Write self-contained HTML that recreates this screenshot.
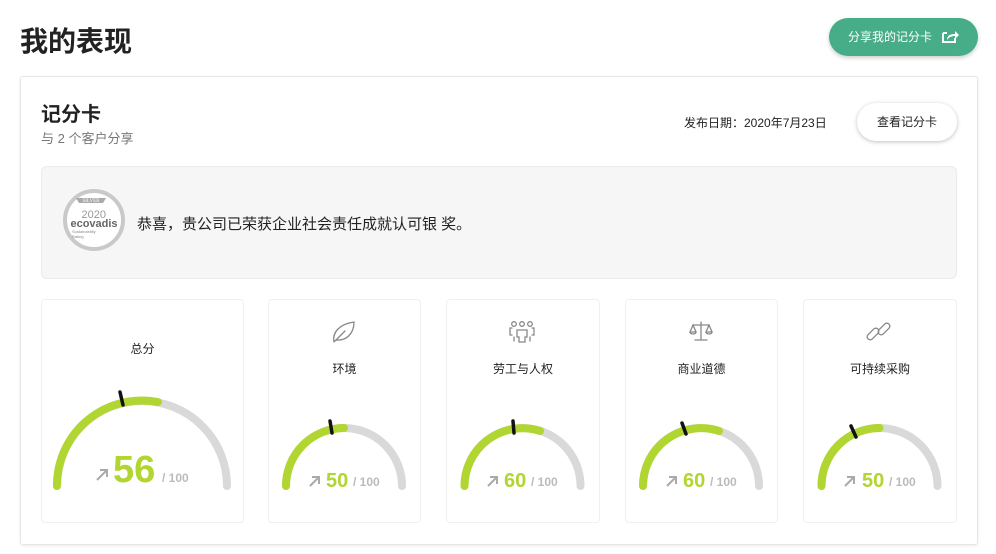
<!DOCTYPE html>
<html><head><meta charset="utf-8"><style>
*{margin:0;padding:0;box-sizing:border-box}
body{width:996px;height:554px;background:#fff;font-family:"Liberation Sans","Noto Sans CJK SC",sans-serif;position:relative;overflow:hidden;color:#222}
.abs{position:absolute}
h1{position:absolute;left:20px;top:20px;font-size:28px;font-weight:bold;color:#222}
.share{left:829px;top:18px;width:149px;height:38px;border-radius:19px;background:#46ad88;color:#fff;font-size:12px;line-height:38px;padding-left:19px;box-shadow:0 2px 4px rgba(0,0,0,.2)}
.outer{left:20px;top:76px;width:958px;height:469px;border:1px solid #e6e6e6;border-radius:3px;box-shadow:0 1px 3px rgba(0,0,0,.08)}
.view{left:857px;top:103px;width:100px;height:38px;border-radius:19px;background:#fff;box-shadow:0 1px 4px rgba(0,0,0,.25);font-size:12px;text-align:center;line-height:38px}
.banner{left:41px;top:166px;width:916px;height:113px;background:#f6f6f6;border:1px solid #ebebeb;border-radius:6px}
.card{top:299px;height:224px;border:1px solid #f0f0f0;border-radius:4px;background:#fff}
.lbl{font-size:12px;color:#222;text-align:center;width:100%;position:absolute}
</style></head><body>
<h1>我的表现</h1>
<div class="abs share">分享我的记分卡 <svg style="position:absolute;left:112px;top:11px" width="18" height="15" viewBox="0 0 18 15"><path d="M2 4h4M2 4v9h12v-4" fill="none" stroke="#fff" stroke-width="2"/><path d="M6 11c0-5 4-6 8-6V2l4 4-4 4V7c-3 0-6 1-8 4z" fill="#fff"/></svg></div>
<div class="abs outer"></div>
<div class="abs" style="left:41px;top:98px;font-size:20px;font-weight:bold">记分卡</div>
<div class="abs" style="left:41px;top:128px;font-size:13px;color:#777">与 2 个客户分享</div>
<div class="abs" style="left:684px;top:114px;font-size:12px">发布日期：2020年7月23日</div>
<div class="abs view">查看记分卡</div>
<div class="abs banner"></div>
<svg class="abs" style="left:62px;top:188px" width="66" height="64" viewBox="0 0 66 64">
<circle cx="32" cy="32" r="29" fill="#fff" stroke="#c9c9c9" stroke-width="4"/>
<path d="M14 10h30l-3 5h-24z" fill="#aaa"/>
<text x="29" y="14" font-size="5" fill="#fff" text-anchor="middle" font-family="Liberation Serif">SILVER</text>
<text x="44" y="30" font-size="11" fill="#999" text-anchor="end">2020</text>
<text x="32" y="39" font-size="11" fill="#666" text-anchor="middle" font-weight="bold">ecovadis</text>
<text x="10" y="45" font-size="4" fill="#888">Sustainability</text>
<text x="10" y="50" font-size="4" fill="#888">Rating</text>
</svg>
<div class="abs" style="left:137px;top:213px;font-size:15px;color:#222">恭喜，贵公司已荣获企业社会责任成就认可银 奖。</div>

<div class="abs card" style="left:41px;width:203px"><div class="lbl" style="top:40px">总分</div></div>
<div class="abs card" style="left:268px;width:153px"><div class="lbl" style="top:60px">环境</div></div>
<div class="abs card" style="left:446px;width:154px"><div class="lbl" style="top:60px">劳工与人权</div></div>
<div class="abs card" style="left:625px;width:153px"><div class="lbl" style="top:60px">商业道德</div></div>
<div class="abs card" style="left:803px;width:154px"><div class="lbl" style="top:60px">可持续采购</div></div>

<svg class="abs" style="left:0;top:0" width="996" height="554" viewBox="0 0 996 554" fill="none">
<g stroke="#888" stroke-width="1.3" stroke-linecap="round">
<path d="M334 342c-2-10 6-18 20-20 0 12-8 19-18 18M335 341l10-10"/>
<circle cx="514" cy="324" r="2.3"/><circle cx="522" cy="324" r="2.3"/><circle cx="530" cy="324" r="2.3"/>
<path d="M517 330h10v7h-2v5h-6v-5h-2zM512 328h-2v7h2M532 328h2v7h-2M514 337v4M530 337v4"/>
<path d="M701 322v18M693 325h16M695 340h12M693 325l-3 7h6zM709 325l-3 7h6zM690 332a3 2 0 0 0 6 0M706 332a3 2 0 0 0 6 0"/>
<rect x="866" y="331" width="14" height="6" rx="3" transform="rotate(-45 873 334)"/>
<rect x="877" y="326" width="14" height="6" rx="3" transform="rotate(-45 884 329)"/>
</g>
<g stroke-width="8" stroke-linecap="round">
<path d="M57 486A85 85 0 0 1 227 486" stroke="#d9d9d9"/>
<path d="M57 486A85 85 0 0 1 158 402" stroke="#b1d531"/>
<path d="M286 486A58 58 0 0 1 402 486" stroke="#d9d9d9"/>
<path d="M286 486A58 58 0 0 1 344 428" stroke="#b1d531"/>
<path d="M464.5 486A58 58 0 0 1 580.5 486" stroke="#d9d9d9"/>
<path d="M464.5 486A58 58 0 0 1 540 431" stroke="#b1d531"/>
<path d="M643 486A58 58 0 0 1 759 486" stroke="#d9d9d9"/>
<path d="M643 486A58 58 0 0 1 719 431" stroke="#b1d531"/>
<path d="M821.5 486A58 58 0 0 1 937.5 486" stroke="#d9d9d9"/>
<path d="M821.5 486A58 58 0 0 1 879.5 428" stroke="#b1d531"/>
</g>
<g stroke="#111" stroke-width="3.5" stroke-linecap="round">
<path d="M120 392l3 13"/><path d="M330 421l2 12"/><path d="M513 421l1 12"/><path d="M682 423l4 11"/><path d="M851 426l5 11"/>
</g>
<g stroke="#aaa" stroke-width="2"><path d="M97 480l10-10M100 470h7v7"/><path d="M310 486l9-9M312 477h7v7"/><path d="M488 486l9-9M490 477h7v7"/><path d="M667 486l9-9M669 477h7v7"/><path d="M845 486l9-9M847 477h7v7"/></g>
<g font-family="Liberation Sans" font-weight="bold" fill="#b1d531" stroke="none">
<text x="113" y="482" font-size="38">56</text>
<text x="326" y="487" font-size="20">50</text>
<text x="504" y="487" font-size="20">60</text>
<text x="683" y="487" font-size="20">60</text>
<text x="862" y="487" font-size="20">50</text>
</g>
<g font-family="Liberation Sans" font-weight="bold" fill="#bbb" font-size="12" stroke="none">
<text x="162" y="482">/ 100</text><text x="353" y="486">/ 100</text><text x="531" y="486">/ 100</text><text x="710" y="486">/ 100</text><text x="889" y="486">/ 100</text>
</g>
</svg>
</body></html>
